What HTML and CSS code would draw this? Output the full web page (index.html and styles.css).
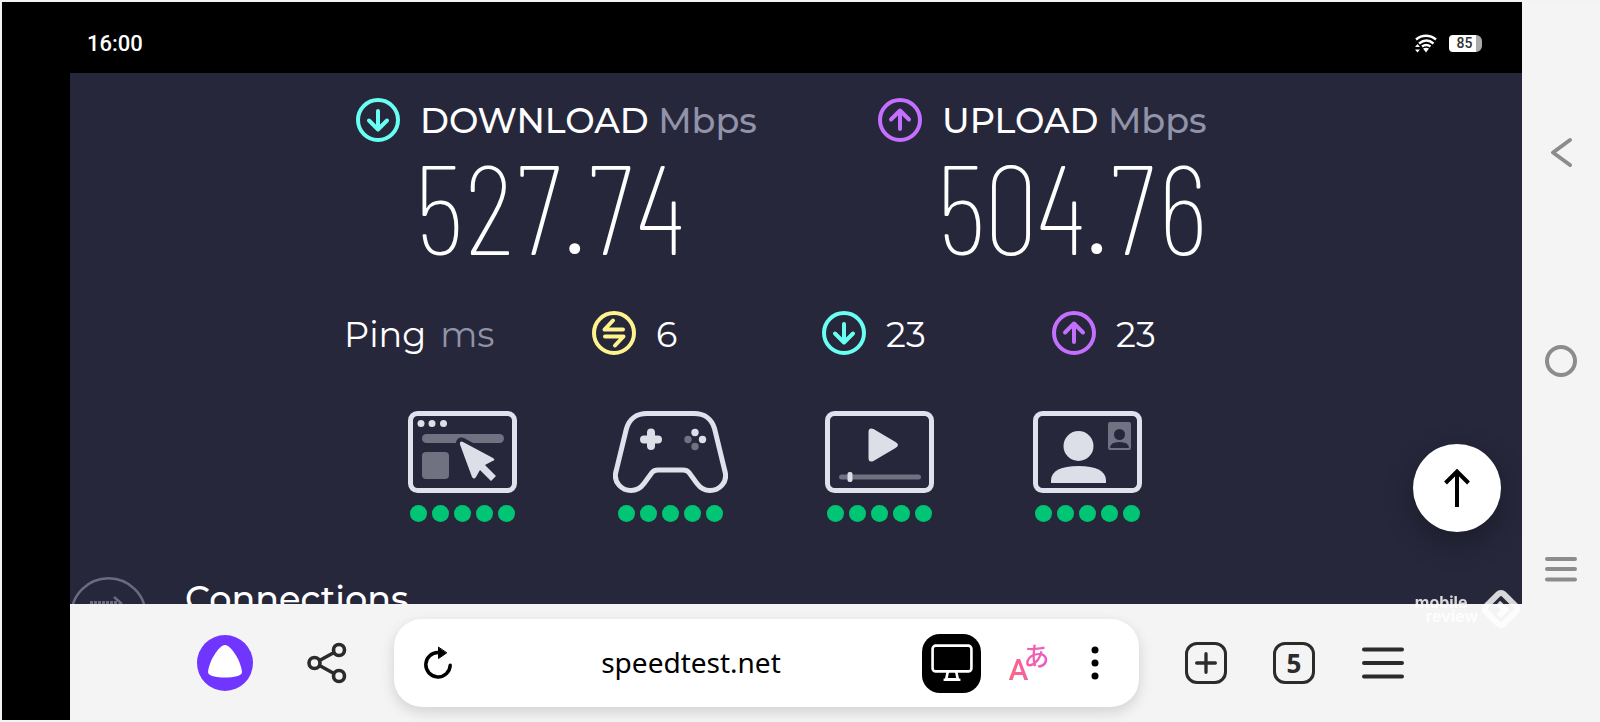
FILE: index.html
```html
<!DOCTYPE html>
<html lang="en">
<head>
    <title>speedtest.net</title>
    <meta charset="UTF-8">
    <meta name="viewport" content="width=device-width, initial-scale=1">
    <link rel="stylesheet" href="styles.css">
</head>
<body>
    <!-- shared icons -->
    <svg class="symbols" aria-hidden="true">
        <symbol id="down" viewBox="0 0 44 44">
            <circle cx="22" cy="22" r="20"/>
            <path d="M22 13v18M13 22.500l9 9 9-9"/>
        </symbol>
        <symbol id="up" viewBox="0 0 44 44">
            <circle cx="22" cy="22" r="20"/>
            <path d="M22 31V13M13 21.500l9-9 9 9"/>
        </symbol>
        <symbol id="idle" viewBox="0 0 44 44">
            <circle cx="22" cy="22" r="20"/>
            <path d="M21 9.500l-8.500 9H31M13 25.500h18.500l-8.500 9"/>
        </symbol>
    </svg>

    <div class="phone">
        <header class="status">
            <span class="time">16:00</span>
            <div class="status-icons">
                <svg class="wifi" viewBox="0 0 22 19" fill="none" stroke="#fff" stroke-width="2.400">
                    <path d="M1 5.500c6-5 14-5 20 0M4 9.500c5-4 10-4 14.500 0M7 12.500c3-2 5.500-2 8.500 0"/>
                    <path d="M8 14.500q3-1.500 6 0l-3 4zM0 13l2.500-3L5 13zM0 15.500L2.500 18.500 5 15.500z" fill="#fff" stroke="none"/>
                </svg>
                <span class="battery">85</span>
            </div>
        </header>

        <main class="page">
            <section class="results">
                <div class="result">
                    <svg class="ring cyan"><use href="#down"/></svg>
                    <h2>DOWNLOAD <span class="unit">Mbps</span></h2>
                    <p class="speed">527.74</p>
                </div>
                <div class="result">
                    <svg class="ring purple"><use href="#up"/></svg>
                    <h2>UPLOAD <span class="unit">Mbps</span></h2>
                    <p class="speed">504.76</p>
                </div>
            </section>

            <section class="ping">
                <div class="ping-item ping-label">Ping <span class="unit">ms</span></div>
                <div class="ping-item"><svg class="ring yellow"><use href="#idle"/></svg><span>6</span></div>
                <div class="ping-item"><svg class="ring cyan"><use href="#down"/></svg><span>23</span></div>
                <div class="ping-item"><svg class="ring purple"><use href="#up"/></svg><span>23</span></div>
            </section>

            <section class="quality">
                <div class="quality-item">
                    <svg class="device" viewBox="0 0 109 82">
                        <rect class="frame" x="2.500" y="2.500" width="104" height="77" rx="7"/>
                        <circle cx="13" cy="12.500" r="3.500"/><circle cx="24" cy="12.500" r="3.500"/><circle cx="35.500" cy="12.500" r="3.500"/>
                        <rect class="dim" x="14" y="23" width="82" height="9" rx="4.500"/>
                        <rect class="dim" x="14" y="41" width="27" height="27" rx="4"/>
                        <path class="cursor" d="M52 33.500q-.5-4 3-2.500l30 16q3 2-.5 3L77 54l11 11-5 5-11-11-4 7q-2 3-4 0z"/>
                    </svg>
                    <div class="dots"><i></i><i></i><i></i><i></i><i></i></div>
                </div>
                <div class="quality-item">
                    <svg class="device gamepad" viewBox="0 0 115 82">
                        <path class="frame" d="M34 2.500h47c11 0 18 6 20.500 15l10.500 43c3 11-6 19-15 19-6 0-10-3-13-7l-8-11q-2-2.500-6-2.500H45q-4 0-6 2.500l-8 11c-3 4-7 7-13 7-9 0-18-8-15-19l10.500-43c2.500-9 9.500-15 20.500-15z"/>
                        <path class="plus" d="M38 21.500v13.500M31 28.500h14"/>
                        <circle cx="82" cy="21.500" r="3.700"/><circle cx="89.500" cy="28.500" r="3.700"/>
                        <circle class="dim" cx="75" cy="28.500" r="3.700"/><circle class="dim" cx="82" cy="35.500" r="3.700"/>
                    </svg>
                    <div class="dots"><i></i><i></i><i></i><i></i><i></i></div>
                </div>
                <div class="quality-item">
                    <svg class="device" viewBox="0 0 109 82">
                        <rect class="frame" x="2.500" y="2.500" width="104" height="77" rx="7"/>
                        <path d="M43.500 21q0-5 5-3l22 13q5 3 0 6l-22 13q-5 2-5-3z"/>
                        <rect class="dim" x="14" y="63.500" width="82" height="5" rx="2.500"/>
                        <rect x="22.500" y="61" width="5" height="10" rx="2"/>
                    </svg>
                    <div class="dots"><i></i><i></i><i></i><i></i><i></i></div>
                </div>
                <div class="quality-item">
                    <svg class="device" viewBox="0 0 109 82">
                        <rect class="frame" x="2.500" y="2.500" width="104" height="77" rx="7"/>
                        <circle cx="45.500" cy="35" r="15"/>
                        <path d="M18 72v-3q1-14 27.500-14T73 69v3z"/>
                        <rect class="dim" x="75" y="11" width="23" height="28" rx="2"/>
                        <circle class="hole" cx="86.500" cy="23.500" r="5.500"/>
                        <path class="hole" d="M77 37q0-6 9.500-6t9.500 6z"/>
                    </svg>
                    <div class="dots"><i></i><i></i><i></i><i></i><i></i></div>
                </div>
            </section>

            <section class="connections">
                <svg class="conn-icon" viewBox="0 0 77 77" fill="none" stroke="#6a6b80">
                    <circle cx="38.500" cy="38.500" r="37.200" stroke-width="2.500"/>
                    <path d="M20 26h27" stroke-width="4" stroke-dasharray="3 1"/>
                    <path d="M44 20l7 6-7 6" stroke-width="2.500"/>
                </svg>
                <h3>Connections</h3>
            </section>

            <button class="to-top" aria-label="Back to top">
                <svg viewBox="0 0 26 38" fill="none" stroke="#000" stroke-width="4"><path d="M13 38V3M1.500 14L13 2.500 24.500 14"/></svg>
            </button>
        </main>

        <footer class="browser">
            <button class="alice" aria-label="Alice">
                <svg viewBox="0 0 56 56"><circle cx="28" cy="28" r="28" fill="#7035ff"/><path d="M28 10c6 0 16 16 17 27 0 4-8 5.500-17 5.500S11 41 11 37c1-11 11-27 17-27z" fill="#fff"/></svg>
            </button>
            <button class="share" aria-label="Share">
                <svg viewBox="0 0 40 42" fill="none" stroke="#2b2b2b" stroke-width="3.600">
                    <circle cx="7.500" cy="21" r="5.500"/><circle cx="32" cy="8" r="5.500"/><circle cx="32" cy="34" r="5.500"/>
                    <path d="M12.500 18.500L27 10.500M12.500 23.500L27 31.500"/>
                </svg>
            </button>
            <div class="address">
                <button class="reload" aria-label="Reload">
                    <svg viewBox="0 0 30 34" fill="none" stroke="#000" stroke-width="3.500" stroke-linecap="round"><path d="M15.500 6.500a12.200 12.200 0 1 0 11.700 12.700"/><path d="M15.500 1.500v11l8-5.500z" fill="#000" stroke-width="1"/></svg>
                </button>
                <input class="url" type="text" value="speedtest.net" aria-label="Address">
                <button class="desktop" aria-label="Desktop version">
                    <svg viewBox="0 0 40 36" fill="none" stroke="#fff" stroke-width="2.500"><rect x="1.500" y="1.500" width="37" height="24.500" rx="3"/><path d="M16 26l-1.500 7.500h11L24 26M12 34h16"/></svg>
                </button>
                <button class="translate" aria-label="Translate"><span class="latin">A</span><span class="kana" lang="ja">あ</span></button>
                <button class="more" aria-label="More">
                    <svg viewBox="0 0 8 34"><circle cx="4" cy="4" r="3.500"/><circle cx="4" cy="17" r="3.500"/><circle cx="4" cy="30" r="3.500"/></svg>
                </button>
            </div>
            <button class="square" aria-label="New tab">
                <svg viewBox="0 0 20 20" stroke="#2b2b2b" stroke-width="3" stroke-linecap="round"><path d="M10 1.500v17M1.500 10h17"/></svg>
            </button>
            <button class="square" aria-label="Tabs">5</button>
            <button class="menu" aria-label="Menu">
                <svg viewBox="0 0 44 32" stroke="#2b2b2b" stroke-width="4" stroke-linecap="round"><path d="M3 2.500h38M3 16h38M3 29.500h38"/></svg>
            </button>
        </footer>
    </div>

    <nav class="system">
        <button aria-label="Back"><svg viewBox="0 0 40 40"><path d="M29 8L12 20.500 29 33"/></svg></button>
        <button aria-label="Home"><svg viewBox="0 0 40 40"><circle cx="20" cy="20" r="14"/></svg></button>
        <button aria-label="Recent apps"><svg viewBox="0 0 40 40"><path d="M6 9h28M6 19h28M6 29.500h28"/></svg></button>
    </nav>

    <div class="watermark">
        <div class="watermark-text"><span>mobile</span><span>review</span></div>
        <svg viewBox="0 0 42 42" fill="none" stroke="#fff"><rect x="8.500" y="8.500" width="25" height="25" rx="4" stroke-width="6" transform="rotate(45 21 21)"/><path d="M18 15l7 6.500-6.500 6.500" stroke-width="6"/></svg>
    </div>
</body>
</html>
```
FILE: styles.css
```css
* {
    box-sizing: border-box;
}
body {
    display: flex;
    height: 100vh;
    margin: 0;
    padding: 2px 0 2px 2px;
    background: #f1f3f4;
    font-family: Montserrat, Inter, sans-serif;
    overflow: hidden;
}
button {
    display: flex;
    align-items: center;
    justify-content: center;
    flex: none;
    padding: 0;
    border: none;
    background: none;
    cursor: pointer;
}
h2, h3, p {
    margin: 0;
}
.symbols {
    position: absolute;
    width: 0;
    height: 0;
}
.phone {
    display: flex;
    flex-direction: column;
    flex: 1;
    min-width: 0;
    padding-left: 68px;
    background: #000;
}

/* status bar */
.status {
    display: flex;
    align-items: center;
    justify-content: space-between;
    height: 71px;
    padding: 12px 40px 0 17px;
    color: #fff;
    font-family: Roboto, sans-serif;
}
.time {
    font-size: 22px;
    font-weight: 500;
}
.status-icons {
    display: flex;
    align-items: center;
    gap: 12px;
}
.wifi {
    width: 22px;
    height: 19px;
}
.battery {
    width: 33px;
    padding-right: 2px;
    border-radius: 4px 6px 6px 4px;
    background: linear-gradient(to right, #fff 27px, #aaa 27px);
    color: #333;
    font-size: 14px;
    font-weight: 500;
    line-height: 17px;
    text-align: center;
}

/* speed test page */
.page {
    position: relative;
    flex: 1;
    min-height: 0;
    padding-top: 25px;
    overflow: hidden;
    background: #26273b;
    color: #fff;
}
.results {
    display: grid;
    grid-template-columns: 522fr 358fr;
    padding: 0 286px;
}
.result {
    display: grid;
    grid-template-columns: 44px 1fr;
    column-gap: 20px;
    align-items: center;
}
.result h2 {
    padding-top: 2px;
    font-size: 35px;
    font-weight: 500;
    line-height: 42px;
    white-space: nowrap;
}
.unit {
    color: #9193a8;
}
.speed {
    grid-column: 2;
    margin: 13px 0 0 -6px;
    font-family: "Barlow Condensed", "Roboto Condensed", sans-serif;
    font-size: 126px;
    font-weight: 200;
    font-kerning: none;
    font-variant-numeric: tabular-nums;
    line-height: 100px;
}
.ring {
    width: 44px;
    height: 44px;
    fill: none;
    stroke-width: 4;
    stroke-linecap: round;
    stroke-linejoin: round;
}
.cyan {
    stroke: #6afff3;
}
.purple {
    stroke: #c46fff;
}
.yellow {
    stroke: #fff38e;
}
.ping {
    display: grid;
    grid-template-columns: 248fr 230fr 230fr 196fr;
    margin-top: 56px;
    padding: 0 274px;
    font-size: 35px;
    line-height: 47px;
}
.ping-item {
    display: flex;
    gap: 20px;
}
.ping-label {
    gap: 14px;
}
.quality {
    display: grid;
    grid-template-columns: repeat(4, 1fr);
    margin-top: 53px;
    padding: 0 330px 0 288px;
}
.quality-item {
    display: flex;
    flex-direction: column;
    align-items: center;
    gap: 12px;
}
.device {
    width: 109px;
    height: 82px;
    fill: #dcdee8;
}
.gamepad {
    width: 115px;
}
.frame {
    fill: none;
    stroke: #dfe1ec;
    stroke-width: 5;
}
.dim {
    fill: #707181;
}
.hole {
    fill: #26273b;
}
.cursor {
    stroke: #26273b;
    stroke-width: 8;
    paint-order: stroke;
}
.plus {
    stroke: #dcdee8;
    stroke-width: 8;
    stroke-linecap: round;
}
.dots {
    display: flex;
    gap: 5px;
}
.dots i {
    width: 17px;
    height: 17px;
    border-radius: 50%;
    background: #00c574;
}
.connections {
    display: flex;
    align-items: flex-start;
    gap: 38px;
    margin-top: 55px;
}
.conn-icon {
    width: 77px;
    height: 77px;
}
.connections h3 {
    font-size: 35px;
    font-weight: 500;
    line-height: 44px;
}
.to-top {
    position: absolute;
    right: 21px;
    bottom: 72px;
    width: 88px;
    height: 88px;
    border-radius: 50%;
    background: #fff;
    box-shadow: 0 10px 30px rgba(0, 0, 0, 0.3);
}
.to-top svg {
    width: 26px;
    height: 38px;
}

/* browser toolbar */
.browser {
    display: flex;
    align-items: center;
    height: 116px;
    padding: 2px 117px 0 127px;
    background: #f4f4f4;
}
.alice svg {
    width: 56px;
    height: 56px;
}
.share {
    margin: 0 47px 0 54px;
}
.share svg {
    width: 40px;
    height: 42px;
}
.address {
    display: flex;
    align-items: center;
    flex: 1;
    min-width: 0;
    height: 88px;
    margin-right: 46px;
    padding: 0 40px 0 29px;
    border-radius: 28px;
    background: #fff;
    box-shadow: 0 5px 14px rgba(0, 0, 0, 0.14);
}
.reload svg {
    width: 30px;
    height: 34px;
}
.url {
    flex: 1;
    min-width: 0;
    margin: 0 17px 0 24px;
    padding: 0 0 2px;
    border: none;
    background: none;
    color: #000;
    font-family: "Noto Sans", sans-serif;
    font-size: 28px;
    line-height: 36px;
    text-align: center;
}
.desktop {
    width: 59px;
    height: 59px;
    border-radius: 18px;
    background: #000;
}
.desktop svg {
    width: 42px;
    height: 38px;
}
.translate {
    align-items: flex-end;
    width: 40px;
    height: 40px;
    margin: 0 42px 0 28px;
    background: linear-gradient(to right, #ff6480, #e95cd0);
    background-clip: text;
    color: transparent;
}
.latin {
    font-family: Roboto, sans-serif;
    font-size: 30px;
    font-weight: 500;
    line-height: 26px;
}
.kana {
    align-self: flex-start;
    margin-left: -5px;
    font-family: "Noto Sans CJK JP", sans-serif;
    font-size: 26px;
    font-weight: 500;
    line-height: 24px;
}
.more svg {
    width: 8px;
    height: 34px;
}
.square {
    width: 42px;
    height: 42px;
    margin-right: 46px;
    border: 3px solid #2b2b2b;
    border-radius: 12px;
    color: #2b2b2b;
    font-family: "Noto Sans", sans-serif;
    font-size: 26px;
    font-weight: 700;
    line-height: 36px;
}
.square svg {
    width: 22px;
    height: 22px;
}
.menu svg {
    width: 44px;
    height: 32px;
}

/* system navigation */
.system {
    display: flex;
    flex-direction: column;
    align-items: center;
    justify-content: space-between;
    width: 78px;
    padding: 130px 0;
    background: #f4f4f4;
}
.system svg {
    width: 40px;
    height: 40px;
    fill: none;
    stroke: #8c8c8c;
    stroke-width: 4;
    stroke-linecap: round;
    stroke-linejoin: round;
}

.watermark {
    position: absolute;
    right: 78px;
    bottom: 92px;
    display: flex;
    align-items: center;
    gap: 2px;
    color: #fff;
    opacity: 0.82;
    pointer-events: none;
}
.watermark-text {
    display: flex;
    flex-direction: column;
    font-family: Inter, sans-serif;
    font-size: 16px;
    font-weight: 700;
    line-height: 14px;
}
.watermark-text span:last-child {
    padding-left: 11px;
}
.watermark svg {
    width: 42px;
    height: 42px;
}
```
